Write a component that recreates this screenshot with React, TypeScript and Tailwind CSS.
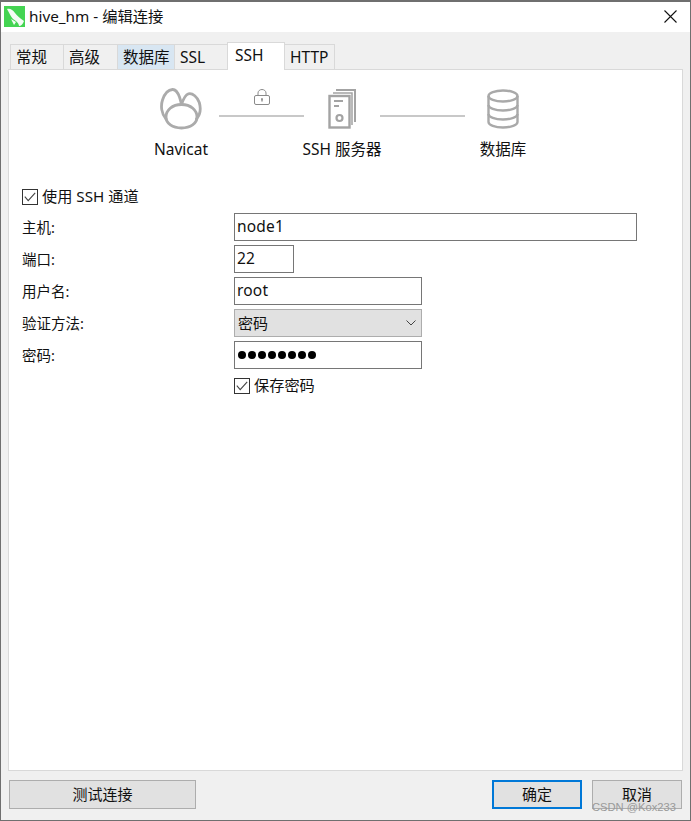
const FONT = "font-['Noto_Sans','Noto_Sans_CJK_SC',sans-serif]";

function Tab({ label, w, hot }: { label: string; w: string; hot?: boolean }) {
  return (
    <div
      className={[
        "h-[25px] -mr-px border border-b-0 border-[#d9d9d9] pl-[5px] text-[15.5px] leading-[25px] whitespace-nowrap",
        w,
        hot ? "bg-[#d8e6f2]" : "bg-[#f0f0f0]",
      ].join(" ")}
    >
      {label}
    </div>
  );
}

function NavicatIcon() {
  return (
    <svg width="42" height="42" viewBox="0 0 42 42" fill="none" stroke="#ababab" strokeWidth="2.8" strokeLinecap="round" strokeLinejoin="round">
      <path d="M6 31C1.500 26 0.500 18 2.500 12C4.500 6 8 1.800 12.500 1.500C16 1.300 18 5 19.500 9C20.500 12 21 14 21.500 16.500" />
      <path d="M21.500 16.500C23 12 25 7 28.500 5.800C32.500 4.800 37.500 9 39.300 14.500C41 20.500 40 27 36.500 31" />
      <path d="M21.500 16.500C12 16.500 6 22.500 6 29C6 35.500 12.500 40 21.500 40C30.500 40 37 35.500 37 29C37 22.500 31 16.500 21.500 16.500Z" />
    </svg>
  );
}

function ServerIcon() {
  return (
    <svg width="28" height="40" viewBox="0 0 28 40" fill="none" stroke="#a3a3a3" strokeWidth="2">
      <path d="M8 1H27V33" />
      <path d="M5 4H24V36" strokeWidth="1.5" />
      <rect x="1.5" y="7" width="20" height="31.5" strokeWidth="2.4" />
      <path d="M6 12H15M6 17H11" strokeWidth="2" />
      <circle cx="11.5" cy="29" r="3" strokeWidth="2.2" />
    </svg>
  );
}

function DbIcon() {
  return (
    <svg width="32" height="40" viewBox="0 0 32 40" fill="none" stroke="#a9a9a9" strokeWidth="2.4">
      <ellipse cx="16" cy="7" rx="14.5" ry="5.5" />
      <path d="M1.5 7V33C1.5 36 8 38.5 16 38.5C24 38.5 30.5 36 30.5 33V7" />
      <path d="M1.5 16C1.5 19 8 21.5 16 21.5C24 21.5 30.5 19 30.5 16" />
      <path d="M1.5 25C1.5 28 8 30.5 16 30.5C24 30.5 30.5 28 30.5 25" />
    </svg>
  );
}

function LockIcon() {
  return (
    <svg width="16" height="16" viewBox="0 0 16 16" fill="none" stroke="#8a8a8a" strokeWidth="1">
      <rect x="0.5" y="6.5" width="15" height="9" rx="1.5" />
      <path d="M4 6.5V4C4 2 5.8 0.5 8 0.5C10.2 0.5 12 2 12 4V6.5" />
      <path d="M8 10V12.5" strokeWidth="1.4" />
      <circle cx="8" cy="10" r="0.9" fill="#8a8a8a" stroke="none" />
    </svg>
  );
}

function Node({ icon, label }: { icon: React.ReactNode; label: string }) {
  return (
    <div className="w-[76px] flex flex-col items-center">
      <div className="h-[42px] flex items-center justify-center">{icon}</div>
      <div className="mt-[8px] h-[22px] text-[15.5px] leading-[22px] whitespace-nowrap">{label}</div>
    </div>
  );
}

function Link({ lock }: { lock?: boolean }) {
  return (
    <div className="w-[85px] h-[29px] flex flex-col items-center justify-end">
      {lock && <div className="mb-[10px] h-[16px]"><LockIcon /></div>}
      <div className="w-full h-[2px] bg-[#c8c8c8]" />
    </div>
  );
}

function Check({ label }: { label: string }) {
  return (
    <div className="flex items-center gap-[4px] h-[20px] text-[15.2px]">
      <div className="w-[16px] h-[16px] border border-[#333] bg-white flex items-center justify-center">
        <svg width="12" height="10" viewBox="0 0 12 10" fill="none" stroke="#444" strokeWidth="1.1">
          <path d="M0.8 4.6L4.2 8.6L11.2 0.8" />
        </svg>
      </div>
      <span className="pb-[2px]">{label}</span>
    </div>
  );
}

function Row({ label, children }: { label: string; children: React.ReactNode }) {
  return (
    <div className="flex items-center h-[28px]">
      <div className="w-[212px] shrink-0 text-[14.5px] pt-[2px]">{label}</div>
      {children}
    </div>
  );
}

function Field({ w, children }: { w: string; children: React.ReactNode }) {
  return (
    <div className={["h-[28px] border border-[#767676] bg-white pl-[2px] text-[15.5px] leading-[25px] tracking-[0.2px]", w].join(" ")}>
      {children}
    </div>
  );
}

export default function App() {
  return (
    <div className={["w-[691px] h-[821px] border border-t-2 border-[#6f6f6f] bg-[#f0f0f0] flex flex-col text-[#111] relative overflow-hidden", FONT].join(" ")}>
      {/* title bar */}
      <div className="h-[30px] shrink-0 bg-white flex items-center pl-[3px] pr-[13px] pb-[2px]">
        <svg width="21" height="21" viewBox="0 0 21 21" className="shrink-0">
          <rect width="21" height="21" fill="#44d452" />
          <path d="M3 3C6 2 9 4 11 7C13 10 16 12 20 15C19 18 17 20 15 20C15 17 12 15 9 13C7 11 6 8 3 3Z" fill="#f4fbf4" />
          <path d="M7 13L10 19L12 16Z" fill="#f4fbf4" />
        </svg>
        <span className="ml-[4px] text-[15.3px] whitespace-nowrap">hive_hm - 编辑连接</span>
        <svg width="13" height="13" viewBox="0 0 13 13" className="ml-auto" stroke="#111" strokeWidth="1.1">
          <path d="M0.5 0.5L12.5 12.5M12.5 0.5L0.5 12.5" />
        </svg>
      </div>

      {/* tabs */}
      <div className="h-[37px] shrink-0 flex items-end pl-[9px] relative z-10">
        <Tab label="常规" w="w-[54px]" />
        <Tab label="高级" w="w-[55px]" />
        <Tab label="数据库" w="w-[58px]" hot />
        <Tab label="SSL" w="w-[54px]" />
        <div className="h-[28px] w-[58px] -mr-px border border-b-0 border-[#d9d9d9] bg-white pl-[7px] text-[15.5px] leading-[24px] translate-y-px z-10">SSH</div>
        <Tab label="HTTP" w="w-[51px]" />
      </div>

      {/* page */}
      <div className="mx-[7px] h-[702px] shrink-0 border border-[#d9d9d9] bg-white pt-[18px] pl-[13px] flex flex-col">
        <div className="flex items-start pl-[121px]">
          <Node icon={<NavicatIcon />} label="Navicat" />
          <Link lock />
          <Node icon={<ServerIcon />} label="SSH 服务器" />
          <Link />
          <Node icon={<DbIcon />} label="数据库" />
        </div>

        <div className="mt-[27px]">
          <Check label="使用 SSH 通道" />
        </div>

        <div className="mt-[6px] flex flex-col gap-[4px]">
          <Row label="主机:"><Field w="w-[403px]">node1</Field></Row>
          <Row label="端口:"><Field w="w-[60px]">22</Field></Row>
          <Row label="用户名:"><Field w="w-[188px]">root</Field></Row>
          <Row label="验证方法:">
            <div className="w-[188px] h-[28px] border border-[#adadad] bg-[#e1e1e1] pl-[3px] pr-[5px] flex items-center justify-between text-[15px]">
              <span>密码</span>
              <svg width="10" height="6" viewBox="0 0 10 6" fill="none" stroke="#444" strokeWidth="1">
                <path d="M0.5 0.5L5 5L9.5 0.5" />
              </svg>
            </div>
          </Row>
          <Row label="密码:">
            <div className="w-[188px] h-[28px] border border-[#767676] bg-white pl-[3px] flex items-center gap-[2px]">
              {[0, 1, 2, 3, 4, 5, 6, 7].map((i) => (
                <div key={i} className="w-[8px] h-[8px] rounded-full bg-black" />
              ))}
            </div>
          </Row>
        </div>

        <div className="mt-[7px] ml-[212px]">
          <Check label="保存密码" />
        </div>
      </div>

      {/* footer */}
      <div className="flex-1 flex items-start pt-[9px] pl-[8px] pr-[8px] text-[15px]">
        <button className="w-[187px] h-[29px] border border-[#adadad] bg-[#e1e1e1]">测试连接</button>
        <button className="ml-auto w-[90px] h-[29px] border-2 border-[#0078d7] bg-[#e1e1e1]">确定</button>
        <button className="ml-[10px] w-[90px] h-[29px] border border-[#adadad] bg-[#e1e1e1]">取消</button>
      </div>

      {/* watermark */}
      <div className="absolute right-[14px] bottom-[6px] text-[11.2px] leading-[14px] text-[#9a9a9a] font-['Liberation_Sans',sans-serif]">CSDN @Kox233</div>
    </div>
  );
}
